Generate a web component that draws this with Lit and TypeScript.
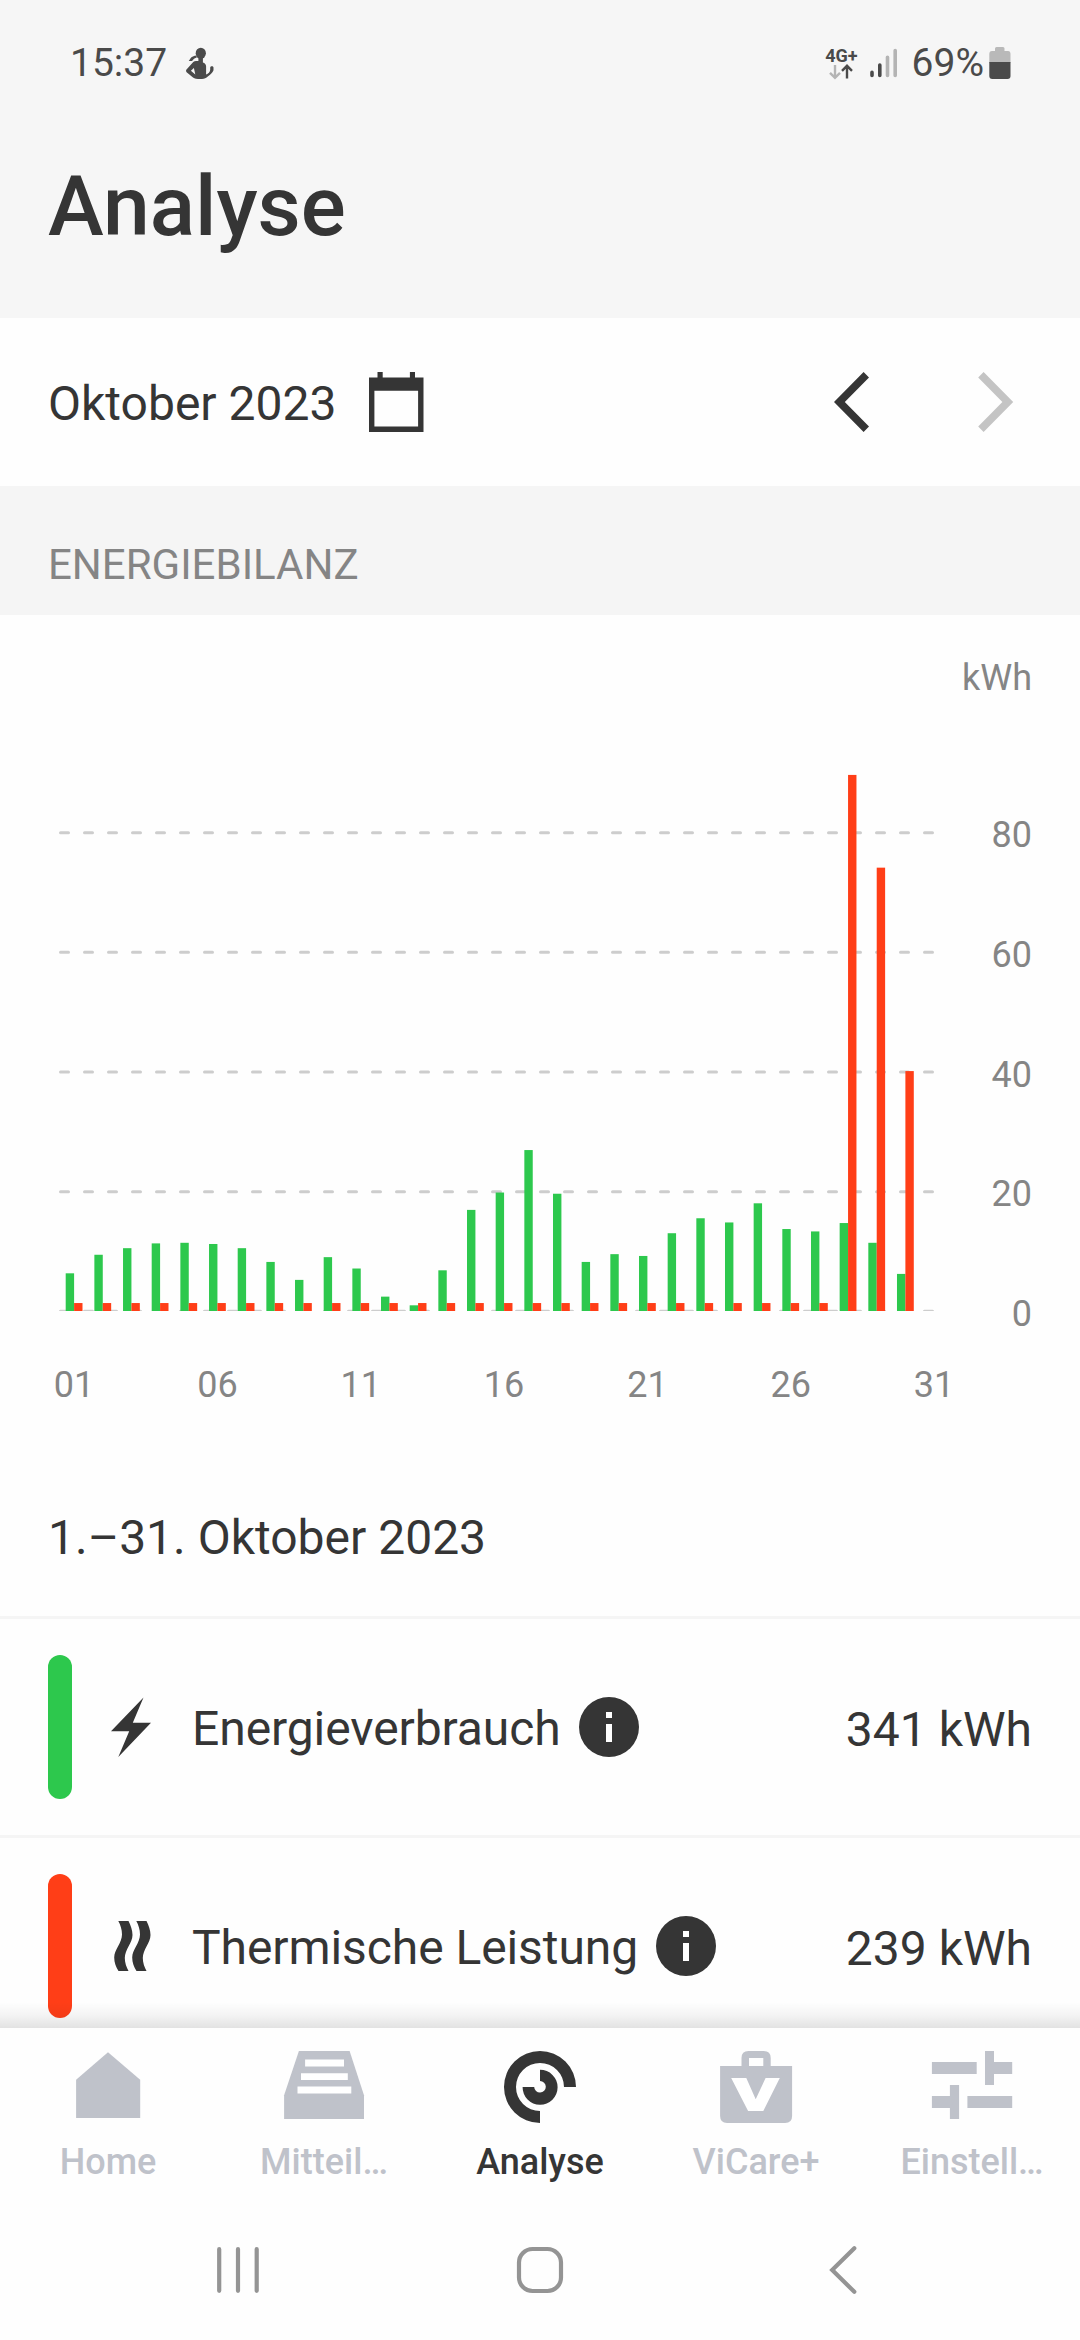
import { LitElement, html, svg, css, nothing } from "lit";
import { classMap } from "lit/directives/class-map.js";

const CONSUMPTION = [
  6.3, 9.4, 10.5, 11.3, 11.4, 11.2, 10.5, 8.2, 5.2, 9, 7.1, 2.4, 0.95, 6.8, 16.9, 19.8, 26.9, 19.6, 8.2, 9.5,
  9.2, 13, 15.5, 14.8, 18, 13.7, 13.3, 14.7, 11.4, 6.2,
];
const THERMAL = [...Array(27).fill(1.33), 89.6, 74.1, 40.1];

class StatusBar extends LitElement {
  static styles = css`
    :host {
      display: flex;
      align-items: center;
      height: 126px;
      padding: 0 69px 0 70px;
      box-sizing: border-box;
      font-size: 39px;
      line-height: 46px;
      color: #4a4a4a;
    }
    .app-icon {
      width: 28px;
      height: 33px;
      margin-left: 19px;
    }
    .right {
      margin-left: auto;
      display: flex;
      align-items: center;
    }
    .network {
      display: flex;
      flex-direction: column;
      align-items: center;
      margin-right: 12px;
      padding-top: 2px;
    }
    .generation {
      font-size: 18px;
      font-weight: 700;
      line-height: 16px;
    }
    .network svg {
      width: 24px;
      height: 16px;
      margin-right: 1px;
    }
    .signal {
      width: 28px;
      height: 32px;
      margin-right: 14px;
    }
    .battery {
      width: 22px;
      height: 32px;
      margin-left: 5px;
    }
    svg {
      display: block;
    }
  `;

  render() {
    return html`
      <span>15:37</span>
      <svg class="app-icon" viewBox="0 0 28 33" fill="#4a4a4a">
        <ellipse cx="14.8" cy="6.3" rx="5.1" ry="5.6" />
        <path d="M10.6 8.6C8 8.6 5.5 10 4.4 11.6C4 12.6 3.4 13.2 2.7 13.5C4 14.4 5.8 14.3 6.8 13.2C7.6 12 9 11 10.8 10.6Z" />
        <path
          fill-rule="evenodd"
          d="M12.4 10.5H16.9V15.4C18.8 16 20.1 17.3 20.1 19.3V27.6C22.2 27 24.2 25 24.2 22.8V20.6C24.4 19 27.3 18.8 27.5 20.6V23.2C26.6 25.5 24.4 27.8 22.1 29.3C20 31.2 18.5 32 16 32H12C9 32 7.4 30.8 5.8 29.5L.6 25.2C-.1 24.5-.1 23.3.5 22.6L6.8 15.4C7.8 14.2 9.5 13.8 12.4 13.9ZM4.9 23.8L9.3 27.4L7.9 21Z"
        />
      </svg>
      <div class="right">
        <div class="network">
          <span class="generation">4G+</span>
          <svg viewBox="0 0 24 16" fill="none" stroke-width="2.4">
            <path stroke="#b4b4b4" d="M6 1V13.6M1 8.8L6 13.8L11 8.8" />
            <path stroke="#4a4a4a" d="M18 14.4V2M13 6.8L18 1.8L23 6.8" />
          </svg>
        </div>
        <svg class="signal" viewBox="0 0 28 32" stroke-width="3.6" stroke-linecap="round">
          <path stroke="#4a4a4a" d="M2 25.4V28.4M9.8 18V28.4" />
          <path stroke="#b4b4b4" d="M17.5 10.2V28.4M25.2 3.6V28.4" />
        </svg>
        <span>69%</span>
        <svg class="battery" viewBox="0 0 22 32">
          <path fill="#b9b9b9" d="M7.5 0H14Q15.5 0 15.5 1.5V4H19Q21.5 4 21.5 7V16H.3V7Q.3 4 3 4H6V1.5Q6 0 7.5 0Z" />
          <path fill="#4a4a4a" d="M.3 15H21.5V29Q21.5 32 18.5 32H3.3Q.3 32 .3 29Z" />
        </svg>
      </div>
    `;
  }
}
customElements.define("status-bar", StatusBar);

class EnergyChart extends LitElement {
  static styles = css`
    :host {
      display: block;
      height: 865px;
    }
    .chart {
      display: block;
      width: 1080px;
      height: 865px;
    }
    .label {
      font-size: 36px;
      fill: #858585;
    }
    .grid {
      stroke: #cdcdcd;
      stroke-width: 3;
      stroke-linecap: round;
      stroke-dasharray: 8 16;
    }
    .consumption {
      fill: #2dc84d;
    }
    .thermal {
      fill: #ff3e17;
    }
  `;

  render() {
    const base = 696;
    const unit = 5.983;
    const step = 28.665;
    const first = 74.1;
    const width = 8.4;
    const bar = (x: number, v: number, cls: string) =>
      svg`<rect class=${cls} x=${x} y=${base - v * unit} width=${width} height=${v * unit} />`;
    return html`
      <svg class="chart" viewBox="0 0 1080 865">
        <defs><clipPath id="plot"><rect x="0" y="0" width="1080" height=${base} /></clipPath></defs>
        <text class="label" x="1032" y="75" text-anchor="end">kWh</text>
        <g clip-path="url(#plot)">
          ${[0, 20, 40, 60, 80].map(
            (v) => svg`<line class="grid" x1="60.5" x2="933" y1=${base + 0.3 - v * unit} y2=${base + 0.3 - v * unit} />`
          )}
        </g>
        ${[0, 20, 40, 60, 80].map(
          (v) => svg`<text class="label" x="1032" y=${base + 15 - v * unit} text-anchor="end">${v}</text>`
        )}
        ${CONSUMPTION.map((v, i) => bar(first + i * step - width, v, "consumption"))}
        ${THERMAL.map((v, i) => bar(first + i * step, v, "thermal"))}
        ${[1, 6, 11, 16, 21, 26, 31].map(
          (d) => svg`<text class="label" x=${first + (d - 1) * step} y="782" text-anchor="middle">${String(d).padStart(2, "0")}</text>`
        )}
      </svg>
    `;
  }
}
customElements.define("energy-chart", EnergyChart);

const bolt = svg`<path d="M33.5 .5L1 34.3H19.2L8.3 60L41 25.8H22.8Z" />`;
const waves = svg`
  <path d="M8.3 5H18.5C20.6 9 22.5 14 22.5 19C22.5 27 14.8 33.5 14.8 42C14.8 47 16.5 51 18.5 55H8.5C6 51 4.2 46.5 4.2 41.5C4.2 33.5 12 27 12 18.5C12 13.5 10.5 9 8.3 5Z" />
  <path d="M26.3 5H36.5C38.6 9 40.5 14 40.5 19C40.5 27 32.8 33.5 32.8 42C32.8 47 34.5 51 36.5 55H26.5C24 51 22.2 46.5 22.2 41.5C22.2 33.5 30 27 30 18.5C30 13.5 28.5 9 26.3 5Z" />
`;

const ROWS = [
  { label: "Energieverbrauch", value: "341 kWh", icon: bolt, tone: "green" },
  { label: "Thermische Leistung", value: "239 kWh", icon: waves, tone: "red" },
];

class EnergySummary extends LitElement {
  static styles = css`
    :host {
      display: block;
      font-size: 48px;
      color: #353535;
    }
    .period {
      height: 136px;
      line-height: 115px;
      padding-left: 48px;
      box-sizing: border-box;
    }
    .row {
      display: flex;
      align-items: center;
      height: 216px;
      border-top: 3px solid #f5f5f5;
      padding: 0 48px;
      line-height: 56px;
    }
    .marker {
      width: 24px;
      height: 144px;
      border-radius: 12px;
    }
    .green {
      background: #2dc84d;
    }
    .red {
      background: #ff3e17;
    }
    .icon {
      width: 42px;
      height: 60px;
      margin: 0 40px 0 38px;
      fill: #353535;
    }
    .label {
      padding-top: 3px;
      letter-spacing: -0.08px;
    }
    .info {
      width: 60px;
      height: 60px;
      margin-left: 18px;
    }
    .value {
      margin-left: auto;
      padding-top: 5px;
    }
  `;

  render() {
    return html`
      <div class="period">1.–31. Oktober 2023</div>
      ${ROWS.map(
        (r) => html`
          <div class="row">
            <div class=${classMap({ marker: true, [r.tone]: true })}></div>
            <svg class="icon" viewBox="0 0 42 60">${r.icon}</svg>
            <span class="label">${r.label}</span>
            <svg class="info" viewBox="0 0 60 60">
              <circle cx="30" cy="30" r="30" fill="#353535" />
              <path fill="#fff" d="M27 15h6v6h-6zM27 27h6v18h-6z" />
            </svg>
            <span class="value">${r.value}</span>
          </div>
        `
      )}
    `;
  }
}
customElements.define("energy-summary", EnergySummary);

const TABS = [
  { label: "Home", icon: svg`<path d="M48 4.3L80.2 31.7V70H16.1V31.7Z" />` },
  {
    label: "Mitteil…",
    icon: svg`
      <path d="M22.9 3H73.6L88 47.3V71H8.1V47.3Z" />
      <path fill="#fff" d="M29.1 11.5H68V18.6H29.1ZM25 25.2H71.8V32H25ZM21.5 38.5H75.3V45.5H21.5Z" />
    `,
  },
  {
    label: "Analyse",
    active: true,
    icon: svg`
      <path d="M84 39A36 36 0 1 0 48 75V63A24 24 0 1 1 72 39Z" />
      <path d="M30.6 39A17.5 17.5 0 1 0 48 21.8V33A5.8 5.8 0 1 1 42.2 39Z" />
    `,
  },
  {
    label: "ViCare+",
    icon: svg`
      <path fill-rule="evenodd" d="M12.1 18H33.5V10Q33.5 3 40.5 3H55.7Q62.7 3 62.7 10V18H84.1V68Q84.1 75 77.1 75H19.1Q12.1 75 12.1 68ZM41 10V18H55.3V10Z" />
      <path fill="#fff" d="M23.2 30H38.3L47.7 51.3L57.6 30H71.8L55.3 63H40.1Z" />
    `,
  },
  {
    label: "Einstell…",
    icon: svg`<path d="M7.9 14H52.7V26H7.9ZM61 3H70V14H88.2V26H70V37H61ZM7.9 48H25.9V37H35.1V71H25.9V60H7.9ZM43.4 48H88.2V60H43.4Z" />`,
  },
];

class TabBar extends LitElement {
  static styles = css`
    :host {
      display: grid;
      grid-template-columns: repeat(5, 1fr);
      height: 176px;
      box-sizing: border-box;
      padding-top: 20px;
      color: #bfc2ca;
      font-size: 36px;
      font-weight: 500;
    }
    .tab {
      display: flex;
      flex-direction: column;
      align-items: center;
      gap: 15px;
      line-height: 42px;
    }
    .active {
      color: #353535;
    }
    .icon {
      width: 96px;
      height: 78px;
      fill: currentColor;
    }
  `;

  render() {
    return TABS.map(
      (t) => html`
        <div class=${classMap({ tab: true, active: !!t.active })} aria-current=${t.active ? "page" : nothing}>
          <svg class="icon" viewBox="0 0 96 78">${t.icon}</svg>
          <span>${t.label}</span>
        </div>
      `
    );
  }
}
customElements.define("tab-bar", TabBar);

class AppRoot extends LitElement {
  static styles = css`
    :host {
      display: flex;
      flex-direction: column;
      width: 1080px;
      height: 2340px;
      overflow: hidden;
      background: #fefefe;
      color: #353535;
      font-family: Roboto, "Liberation Sans", sans-serif;
    }
    .header {
      height: 318px;
      flex: none;
      background: #f6f6f6;
    }
    .title {
      margin: 0;
      padding: 31px 48px 0;
      font-size: 84px;
      line-height: 100px;
      font-weight: 500;
    }
    .period {
      flex: none;
      display: flex;
      align-items: center;
      height: 168px;
      padding: 0 66px 0 48px;
      box-sizing: border-box;
      font-size: 48px;
      line-height: 56px;
    }
    .month {
      padding-top: 3px;
    }
    .calendar {
      width: 56px;
      height: 60px;
      margin-left: 32px;
    }
    .arrows {
      margin-left: auto;
      display: flex;
      gap: 108px;
    }
    .arrows svg {
      width: 36px;
      height: 60px;
    }
    .section {
      flex: none;
      height: 129px;
      box-sizing: border-box;
      padding: 58px 48px 0;
      background: #f5f5f5;
      color: #858585;
      font-size: 42px;
      line-height: 42px;
    }
    .content {
      flex: none;
      height: 1413px;
      overflow: hidden;
      position: relative;
    }
    .shade {
      position: absolute;
      left: 0;
      right: 0;
      bottom: 0;
      height: 26px;
      background: linear-gradient(rgba(0, 0, 0, 0), rgba(0, 0, 0, 0.04) 50%, rgba(0, 0, 0, 0.11));
    }
    .system {
      display: grid;
      grid-template-columns: repeat(3, 304px);
      justify-content: center;
      justify-items: center;
      padding-top: 40px;
    }
    .system svg {
      width: 52px;
      height: 52px;
      fill: none;
      stroke: #949494;
      stroke-width: 4.2;
      stroke-linecap: round;
    }
  `;

  render() {
    return html`
      <div class="header">
        <status-bar></status-bar>
        <h1 class="title">Analyse</h1>
      </div>
      <div class="period">
        <span class="month">Oktober 2023</span>
        <svg class="calendar" viewBox="0 0 56 60">
          <path fill="#353535" fill-rule="evenodd" d="M1 5.4H9.5V0H14.7V5.4H41.9V0H47V5.4H55.5V60H1ZM6.4 18.7V54.4H50.1V18.7Z" />
        </svg>
        <div class="arrows">
          <svg viewBox="0 0 36 60"><path fill="#353535" d="M0 30L29.6 0L35 5.4L10.8 30L35 54.6L29.6 60Z" /></svg>
          <svg viewBox="0 0 36 60"><path fill="#c4c4c4" d="M35.2 30L5.6 0L.2 5.4L24.4 30L.2 54.6L5.6 60Z" /></svg>
        </div>
      </div>
      <div class="section">ENERGIEBILANZ</div>
      <div class="content">
        <energy-chart></energy-chart>
        <energy-summary></energy-summary>
        <div class="shade"></div>
      </div>
      <tab-bar></tab-bar>
      <div class="system">
        <svg viewBox="0 0 52 52"><path d="M9.2 5.2V46.8M28 5.2V46.8M46.7 5.2V46.8" /></svg>
        <svg viewBox="0 0 52 52"><rect x="5" y="5" width="42" height="42" rx="13.5" /></svg>
        <svg viewBox="0 0 52 52"><path d="M36.3 4.2L14.2 26L36.3 47.8" /></svg>
      </div>
    `;
  }
}
customElements.define("app-root", AppRoot);
